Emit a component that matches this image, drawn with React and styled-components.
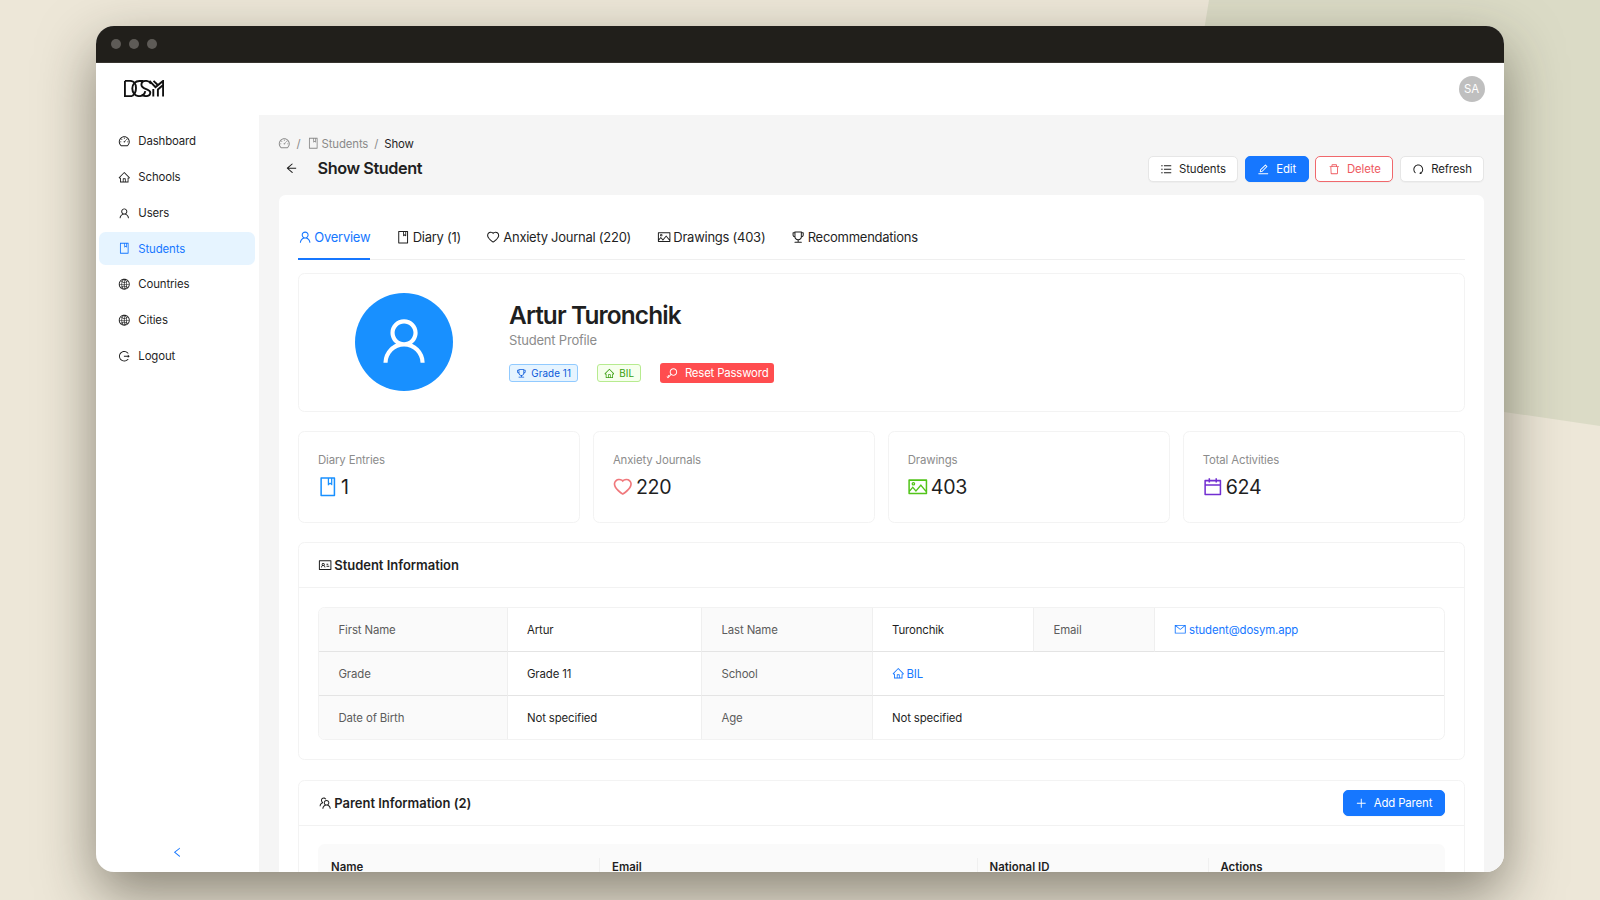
import React, { useState } from 'react';
import styled, { createGlobalStyle, css } from 'styled-components';
import {
  AiOutlineArrowLeft,
  AiOutlineBook,
  AiOutlineCalendar,
  AiOutlineDashboard,
  AiOutlineDelete,
  AiOutlineEdit,
  AiOutlineGlobal,
  AiOutlineHeart,
  AiOutlineHome,
  AiOutlineIdcard,
  AiOutlineKey,
  AiOutlineLeft,
  AiOutlineLogout,
  AiOutlineMail,
  AiOutlinePicture,
  AiOutlinePlus,
  AiOutlineRedo,
  AiOutlineTeam,
  AiOutlineTrophy,
  AiOutlineUnorderedList,
  AiOutlineUser,
} from 'react-icons/ai';

const menu = [
  { key: 'dashboard', label: 'Dashboard', icon: AiOutlineDashboard },
  { key: 'schools', label: 'Schools', icon: AiOutlineHome },
  { key: 'users', label: 'Users', icon: AiOutlineUser },
  { key: 'students', label: 'Students', icon: AiOutlineBook },
  { key: 'countries', label: 'Countries', icon: AiOutlineGlobal },
  { key: 'cities', label: 'Cities', icon: AiOutlineGlobal },
  { key: 'logout', label: 'Logout', icon: AiOutlineLogout },
];

const tabs = [
  { key: 'overview', label: 'Overview', icon: AiOutlineUser },
  { key: 'diary', label: 'Diary (1)', icon: AiOutlineBook },
  { key: 'anxiety', label: 'Anxiety Journal (220)', icon: AiOutlineHeart },
  { key: 'drawings', label: 'Drawings (403)', icon: AiOutlinePicture },
  { key: 'recommendations', label: 'Recommendations', icon: AiOutlineTrophy },
];

const stats = [
  { label: 'Diary Entries', value: 1, icon: AiOutlineBook, color: '#1890ff' },
  { label: 'Anxiety Journals', value: 220, icon: AiOutlineHeart, color: '#f0787c' },
  { label: 'Drawings', value: 403, icon: AiOutlinePicture, color: '#52c41a' },
  { label: 'Total Activities', value: 624, icon: AiOutlineCalendar, color: '#722ed1' },
];

function Logo() {
  return (
    <LogoSvg viewBox="0 0 40 17">
      <path d="M.9.9v15.200h7.300M.9.9h5.300c3.600 0 5.800 3 5.800 7s-1.500 6.400-3.800 8.200" />
      <path d="M19.500 1H15.500C11.200 1 8.300 4.200 8.300 8.500s2.900 7.600 6.700 7.600c3.400 0 5.700-2 6.300-5" />
      <path d="M27 3.600C25.700 1.800 24.200.9 22 .9c-2.800 0-4.600 1.700-4.600 3.900 0 4.900 8.900 3.800 8.900 7.700 0 2.200-1.800 3.600-4.300 3.600-1.800 0-3.200-.6-4.200-1.800" />
      <path d="M25.500.9l6 6.200L39.100.9V16.500M29.300 16.500V9M33.900 16.500V9.500l5.200-4.500M29.500.9l3.800 3.600" />
    </LogoSvg>
  );
}

function App() {
  const [page, setPage] = useState('students');
  const [tab, setTab] = useState('overview');

  return (
    <Desktop>
      <GlobalStyle />
      <Window>
        <TitleBar>
          <Dot />
          <Dot />
          <Dot />
        </TitleBar>
        <Header>
          <Logo />
          <UserBadge>SA</UserBadge>
        </Header>
        <Body>
          <Sider>
            <Menu>
              {menu.map(({ key, label, icon: Icon }) => (
                <MenuItem key={key} $active={page === key} onClick={() => setPage(key)}>
                  <Icon />
                  {label}
                </MenuItem>
              ))}
            </Menu>
            <Collapse>
              <AiOutlineLeft />
            </Collapse>
          </Sider>
          <Main>
            <PageHeader>
              <div>
                <Breadcrumb>
                  <AiOutlineDashboard />
                  <span>/</span>
                  <Crumb>
                    <AiOutlineBook />
                    Students
                  </Crumb>
                  <span>/</span>
                  <Crumb $current>Show</Crumb>
                </Breadcrumb>
                <TitleRow>
                  <AiOutlineArrowLeft />
                  <PageTitle>Show Student</PageTitle>
                </TitleRow>
              </div>
              <Actions>
                <Button $width={90}>
                  <AiOutlineUnorderedList />
                  Students
                </Button>
                <Button $width={64} $kind="primary">
                  <AiOutlineEdit />
                  Edit
                </Button>
                <Button $width={78} $kind="danger">
                  <AiOutlineDelete />
                  Delete
                </Button>
                <Button $width={84}>
                  <AiOutlineRedo />
                  Refresh
                </Button>
              </Actions>
            </PageHeader>
            <Content>
              <Tabs>
                {tabs.map(({ key, label, icon: Icon }) => (
                  <Tab key={key} $active={tab === key} onClick={() => setTab(key)}>
                    <Icon />
                    {label}
                  </Tab>
                ))}
              </Tabs>
              <Profile>
                <Avatar>
                  <AiOutlineUser />
                </Avatar>
                <div>
                  <Name>Artur Turonchik</Name>
                  <Role>Student Profile</Role>
                  <Tags>
                    <Tag>
                      <AiOutlineTrophy />
                      Grade 11
                    </Tag>
                    <Tag $green>
                      <AiOutlineHome />
                      BIL
                    </Tag>
                    <ResetButton>
                      <AiOutlineKey />
                      Reset Password
                    </ResetButton>
                  </Tags>
                </div>
              </Profile>
              <Stats>
                {stats.map(({ label, value, icon: Icon, color }) => (
                  <Stat key={label}>
                    <StatLabel>{label}</StatLabel>
                    <StatValue $color={color}>
                      <Icon />
                      {value}
                    </StatValue>
                  </Stat>
                ))}
              </Stats>
              <InfoCard>
                <CardHead>
                  <CardTitle>
                    <AiOutlineIdcard />
                    Student Information
                  </CardTitle>
                </CardHead>
                <Descriptions>
                  <Term>First Name</Term>
                  <Value>Artur</Value>
                  <Term>Last Name</Term>
                  <Value>Turonchik</Value>
                  <Term>Email</Term>
                  <Value>
                    <Link>
                      <AiOutlineMail />
                      student@dosym.app
                    </Link>
                  </Value>
                  <Term>Grade</Term>
                  <Value>Grade 11</Value>
                  <Term>School</Term>
                  <Value $span={3}>
                    <Link>
                      <AiOutlineHome />
                      BIL
                    </Link>
                  </Value>
                  <Term>Date of Birth</Term>
                  <Value>Not specified</Value>
                  <Term>Age</Term>
                  <Value $span={3}>Not specified</Value>
                </Descriptions>
              </InfoCard>
              <InfoCard>
                <CardHead>
                  <CardTitle>
                    <AiOutlineTeam />
                    Parent Information (2)
                  </CardTitle>
                  <Button $width={102} $kind="primary">
                    <AiOutlinePlus />
                    Add Parent
                  </Button>
                </CardHead>
                <ParentHead>
                  <HeadCell>Name</HeadCell>
                  <HeadCell>Email</HeadCell>
                  <HeadCell>National ID</HeadCell>
                  <HeadCell>Actions</HeadCell>
                </ParentHead>
              </InfoCard>
            </Content>
          </Main>
        </Body>
      </Window>
    </Desktop>
  );
}

export default App;

const GlobalStyle = createGlobalStyle`
  * {
    box-sizing: border-box;
  }
  body {
    margin: 0;
    overflow: hidden;
    font-family: Inter, "Liberation Sans", sans-serif;
    font-size: 11.4px;
    letter-spacing: -0.13px;
    color: #1f1f1f;
  }
  svg {
    flex-shrink: 0;
    width: 1.1em;
    height: 1.1em;
  }
`;

const Desktop = styled.div`
  position: relative;
  width: 1600px;
  height: 900px;
  padding: 26px 96px 28px;
  background: #ede7d8;
  overflow: hidden;
  &::before {
    content: '';
    position: absolute;
    inset: 0;
    background: #dbdbc6;
    clip-path: polygon(1209px 0, 1600px 0, 1600px 426px, 1150px 360px);
  }
`;

const Window = styled.div`
  position: relative;
  display: flex;
  flex-direction: column;
  height: 846px;
  border-radius: 18px;
  background: #fff;
  box-shadow: 0 22px 56px rgba(40, 36, 24, 0.5);
  overflow: hidden;
`;

const TitleBar = styled.div`
  display: flex;
  align-items: center;
  gap: 8px;
  flex: 0 0 37px;
  padding-left: 15px;
  background: #211f1b;
  border-bottom: 1px solid #37342f;
`;

const Dot = styled.span`
  width: 10px;
  height: 10px;
  border-radius: 50%;
  background: #5e5b57;
`;

const Header = styled.div`
  display: flex;
  align-items: center;
  justify-content: space-between;
  flex: 0 0 52px;
  padding: 0 19.5px 0 28px;
`;

const LogoSvg = styled.svg`
  width: 40px;
  height: 17px;
  margin-bottom: 1px;
  fill: none;
  stroke: #111;
  stroke-width: 1.9;
`;

const UserBadge = styled.div`
  width: 26px;
  height: 26px;
  border-radius: 50%;
  background: #bfbfbf;
  color: #fff;
  line-height: 27px;
  text-align: center;
`;

const Body = styled.div`
  display: flex;
  flex: 1;
  min-height: 0;
`;

const Sider = styled.div`
  display: flex;
  flex-direction: column;
  justify-content: space-between;
  flex: 0 0 163px;
`;

const Menu = styled.div`
  display: flex;
  flex-direction: column;
  gap: 3.2px;
  padding: 10px 4px 0 3px;
`;

const MenuItem = styled.div`
  display: flex;
  align-items: center;
  gap: 7.5px;
  height: 32.6px;
  padding-left: 19.3px;
  border-radius: 6.5px;
  color: ${(p) => (p.$active ? '#1677ff' : '#1f1f1f')};
  background: ${(p) => (p.$active ? '#e6f4ff' : 'transparent')};
`;

const Collapse = styled.div`
  display: flex;
  justify-content: center;
  height: 26px;
  color: #1677ff;
`;

const Main = styled.div`
  flex: 1;
  padding: 20px 20px 0 19.5px;
  background: #f5f5f5;
  overflow: hidden;
`;

const PageHeader = styled.div`
  display: flex;
  justify-content: space-between;
  height: 60px;
`;

const Breadcrumb = styled.div`
  display: flex;
  align-items: center;
  gap: 6px;
  height: 17px;
  margin-left: -0.5px;
  color: #8a8a8a;
`;

const Crumb = styled.span`
  display: flex;
  align-items: center;
  gap: 2.5px;
  color: ${(p) => (p.$current ? '#1f1f1f' : '#8a8a8a')};
`;

const TitleRow = styled.div`
  display: flex;
  align-items: center;
  gap: 19.5px;
  height: 32px;
  padding-left: 6.5px;
  font-size: 13px;
  svg {
    width: 13px;
  }
`;

const PageTitle = styled.h1`
  margin: 0;
  font-size: 16.3px;
  font-weight: 600;
  letter-spacing: -0.44px;
`;

const Actions = styled.div`
  display: flex;
  gap: 6.7px;
  padding-top: 21px;
`;

const buttonKinds = {
  primary: css`
    border-color: #1677ff;
    background: #1677ff;
    color: #fff;
  `,
  danger: css`
    border-color: #f0686c;
    color: #ee5a5f;
  `,
};

const Button = styled.button`
  display: flex;
  align-items: center;
  justify-content: center;
  gap: 6.5px;
  width: ${(p) => p.$width}px;
  height: 26px;
  padding: 0;
  border: 1px solid #e6e6e6;
  border-radius: 5px;
  background: #fff;
  box-shadow: 0 1px 1px rgba(0, 0, 0, 0.03);
  color: #1f1f1f;
  font: inherit;
  letter-spacing: inherit;
  ${(p) => buttonKinds[p.$kind]}
`;

const Content = styled.div`
  display: flex;
  flex-direction: column;
  padding: 19px 19.5px 0;
  border-radius: 6.5px;
  background: #fff;
`;

const Tabs = styled.div`
  display: flex;
  gap: 26px;
  height: 46px;
  margin-bottom: 13px;
  border-bottom: 1px solid #efefef;
`;

const Tab = styled.div`
  display: flex;
  align-items: center;
  gap: 2.5px;
  height: 46px;
  padding-top: 2px;
  border-bottom: 2px solid ${(p) => (p.$active ? '#1677ff' : 'transparent')};
  font-size: 13px;
  letter-spacing: -0.26px;
  color: ${(p) => (p.$active ? '#1677ff' : '#1f1f1f')};
  svg {
    margin-left: -0.5px;
  }
`;

const Card = styled.div`
  border: 1px solid #f3f3f3;
  border-radius: 6.5px;
`;

const Profile = styled(Card)`
  display: flex;
  align-items: center;
  gap: 56px;
  height: 139px;
  margin-bottom: 19px;
  padding: 0 0 2px 56px;
`;

const Avatar = styled.div`
  display: flex;
  align-items: center;
  justify-content: center;
  width: 98px;
  height: 98px;
  border-radius: 50%;
  background: #1890ff;
  color: #fff;
  font-size: 51px;
`;

const Name = styled.h2`
  margin: 0;
  font-size: 24.4px;
  font-weight: 600;
  line-height: 31px;
  letter-spacing: -0.87px;
`;

const Role = styled.div`
  font-size: 13px;
  line-height: 18px;
  letter-spacing: -0.2px;
  color: #8c8c8c;
`;

const Tags = styled.div`
  display: flex;
  align-items: center;
  gap: 19.5px;
  margin-top: 14px;
`;

const Tag = styled.span`
  display: flex;
  align-items: center;
  gap: 5px;
  height: 18px;
  padding: 0 5.5px;
  border: 1px solid ${(p) => (p.$green ? '#b7eb8f' : '#91caff')};
  border-radius: 3px;
  background: ${(p) => (p.$green ? '#f6ffed' : '#e6f4ff')};
  color: ${(p) => (p.$green ? '#389e0d' : '#0958d9')};
  font-size: 9.8px;
  letter-spacing: 0.1px;
`;

const ResetButton = styled.button`
  display: flex;
  align-items: center;
  justify-content: center;
  gap: 6.5px;
  width: 114px;
  height: 20px;
  padding: 0;
  border: 0;
  border-radius: 3px;
  background: #ff4d4f;
  color: #fff;
  font: inherit;
  letter-spacing: -0.18px;
`;

const Stats = styled.div`
  display: grid;
  grid-template-columns: repeat(4, 1fr);
  gap: 13px;
  margin-bottom: 19px;
`;

const Stat = styled(Card)`
  height: 92px;
  padding: 19px;
`;

const StatLabel = styled.div`
  height: 19.5px;
  line-height: 18px;
  color: #8c8c8c;
`;

const StatValue = styled.div`
  display: flex;
  align-items: center;
  gap: 2.5px;
  height: 32px;
  font-size: 19.6px;
  letter-spacing: -0.25px;
  svg {
    margin-left: -1px;
    color: ${(p) => p.$color};
  }
`;

const InfoCard = styled(Card)`
  margin-bottom: 20px;
`;

const CardHead = styled.div`
  display: flex;
  align-items: center;
  justify-content: space-between;
  height: 45px;
  padding: 0 19px;
  border-bottom: 1px solid #f2f2f2;
`;

const CardTitle = styled.div`
  display: flex;
  align-items: center;
  gap: 2px;
  font-size: 13px;
  font-weight: 600;
  letter-spacing: -0.03px;
`;

const Descriptions = styled.div`
  display: grid;
  grid-template-columns: 188.5px 194.5px 170.5px 161.5px 121px 1fr;
  grid-template-rows: 44px 44px 43px;
  margin: 19px;
  border: 1px solid #f2f2f2;
  border-radius: 6.5px;
  overflow: hidden;
`;

const Cell = styled.div`
  display: flex;
  align-items: center;
  padding-left: 19.5px;
  border-right: 1px solid #efefef;
  border-bottom: 1px solid #e4e4e4;
  &:nth-last-child(-n + 4) {
    border-bottom: 0;
  }
  &:nth-child(6),
  &:nth-child(10),
  &:nth-child(14) {
    border-right: 0;
  }
`;

const Term = styled(Cell)`
  background: #fafafa;
  color: #5c5c5c;
`;

const Value = styled(Cell)`
  grid-column: span ${(p) => p.$span || 1};
`;

const Link = styled.a`
  display: flex;
  align-items: center;
  gap: 2.5px;
  color: #1677ff;
  svg {
    margin-left: -0.5px;
  }
`;

const ParentHead = styled.div`
  display: grid;
  grid-template-columns: 281px 377.5px 231px 1fr;
  height: 45px;
  margin: 18px 19px;
  border-radius: 6.5px 6.5px 0 0;
  background: #fafafa;
`;

const HeadCell = styled.div`
  display: flex;
  align-items: center;
  padding-left: 13px;
  font-weight: 600;
  letter-spacing: 0;
  & + & {
    background: linear-gradient(#f0f0f0, #f0f0f0) no-repeat 0 50% / 1px 18px;
  }
`;
